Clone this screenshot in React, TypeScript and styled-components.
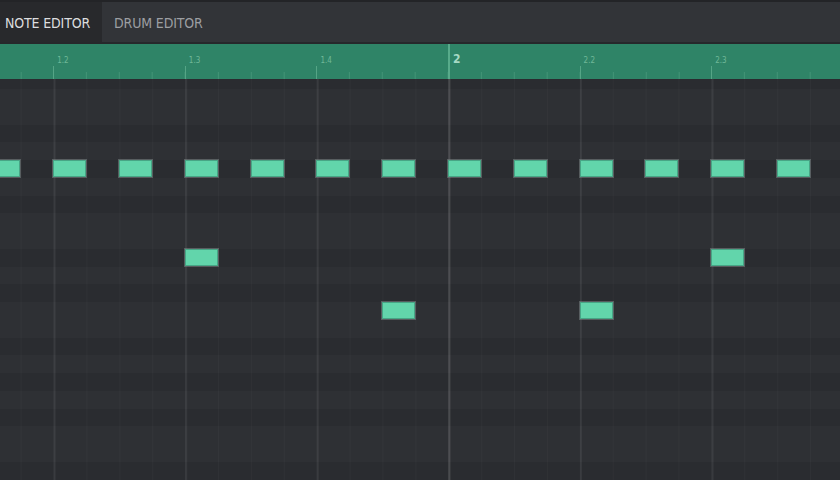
import React from 'react';
import styled, { createGlobalStyle } from 'styled-components';

// grid geometry (px)
const SIXTEENTH = 32.9;
const BEAT = SIXTEENTH * 4;
const SCROLL_X = 78.4;
const ROW_H = 17.75;
const SCROLL_Y = 7.75;
const ROW_COUNT = 25;
const BEAT_COUNT = 8;
const BEATS_PER_BAR = 4;

const BLACK_KEYS = [1, 3, 6, 8, 10];
// pitch class of the row, counting down from the top visible row (C#)
const pitchClass = (row: number) => (((13 - row) % 12) + 12) % 12;

interface Note {
  row: number;
  step: number;
  length: number;
}

const notes: Note[] = [
  ...Array.from({ length: 13 }, (_, i) => ({ row: 5, step: 2 + i * 2, length: 1 })),
  { row: 10, step: 8, length: 1 },
  { row: 10, step: 24, length: 1 },
  { row: 13, step: 14, length: 1 },
  { row: 13, step: 20, length: 1 },
];

const GlobalStyle = createGlobalStyle`
  html, body {
    margin: 0;
    padding: 0;
    background: #2c2e32;
  }
  * {
    box-sizing: border-box;
  }
`;

const Editor = styled.div`
  width: 840px;
  height: 480px;
  overflow: hidden;
  display: flex;
  flex-direction: column;
  background: #2c2e32;
  font-family: "DejaVu Sans Condensed", "DejaVu Sans", sans-serif;
`;

const TabBar = styled.div`
  height: 44px;
  flex: none;
  display: flex;
  background: #323438;
  border-top: 2px solid #232427;
  border-bottom: 2px solid #26282b;
`;

interface TabProps {
  active?: boolean;
}

const Tab = styled.div<TabProps>`
  display: flex;
  align-items: center;
  padding: 1px 12px 0;
  font-size: 14px;
  letter-spacing: -0.15px;
  color: ${({ active }) => (active ? '#dcdddf' : '#9c9ea2')};
  background: ${({ active }) => (active ? '#28292c' : 'transparent')};
  &:first-child {
    padding-left: 5px;
  }
`;

const Ruler = styled.div`
  height: 35px;
  flex: none;
  overflow: hidden;
  background: #2f8467;
  display: flex;
`;

const RulerTrack = styled.div`
  display: flex;
  margin-left: -${SCROLL_X}px;
`;

interface BeatCellProps {
  isBar: boolean;
}

const BeatCell = styled.div<BeatCellProps>`
  flex: none;
  width: ${BEAT}px;
  height: 100%;
  padding-left: ${({ isBar }) => (isBar ? 5 : 4)}px;
  padding-top: ${({ isBar }) => (isBar ? 9 : 13)}px;
  background:
    ${({ isBar }) =>
      isBar
        ? 'linear-gradient(to right, #58ab8b 2px, transparent 2px) 0 0 / 100% 100% no-repeat,'
        : ''}
    linear-gradient(to right, #55a586 1px, transparent 1px) 0 100% / 100% 13px no-repeat,
    linear-gradient(to right, #429476 1px, transparent 1px) 0 100% / ${SIXTEENTH}px 7px repeat-x;
`;

const BeatLabel = styled.span<BeatCellProps>`
  display: block;
  font-size: ${({ isBar }) => (isBar ? 12 : 8)}px;
  font-weight: ${({ isBar }) => (isBar ? 700 : 400)};
  line-height: 1;
  color: ${({ isBar }) => (isBar ? '#a6d9c4' : '#6fb898')};
`;

const Viewport = styled.div`
  flex: 1;
  overflow: hidden;
  display: flex;
`;

const Canvas = styled.div`
  position: relative;
  flex: none;
  width: ${BEAT * BEAT_COUNT}px;
  margin: -${SCROLL_Y}px 0 0 -${SCROLL_X}px;
`;

const Rows = styled.div`
  display: flex;
  flex-direction: column;
`;

interface KeyRowProps {
  black: boolean;
}

const KeyRow = styled.div<KeyRowProps>`
  height: ${ROW_H}px;
  flex: none;
  background: ${({ black }) => (black ? '#2a2c30' : '#2e3034')};
`;

const GridLines = styled.div`
  position: absolute;
  inset: 0;
  pointer-events: none;
  background:
    linear-gradient(to right, rgba(255, 255, 255, 0.09) 2px, transparent 2px) 0 0 / ${BEAT * BEATS_PER_BAR}px 100% repeat-x,
    linear-gradient(to right, rgba(255, 255, 255, 0.06) 1.5px, transparent 1.5px) 0 0 / ${BEAT}px 100% repeat-x,
    linear-gradient(to right, rgba(255, 255, 255, 0.025) 1px, transparent 1px) 0 0 / ${SIXTEENTH}px 100% repeat-x;
`;

const NoteBlock = styled.div`
  position: absolute;
  height: ${ROW_H - 1}px;
  background: #62d5ab;
  border: 1px solid #47a585;
  box-shadow: 0 0 0 1px rgba(140, 150, 150, 0.45);
`;

const beatLabel = (index: number) => {
  const bar = Math.floor(index / BEATS_PER_BAR) + 1;
  const beat = (index % BEATS_PER_BAR) + 1;
  return beat === 1 ? `${bar}` : `${bar}.${beat}`;
};

export default function App() {
  return (
    <>
      <GlobalStyle />
      <Editor>
        <TabBar>
          <Tab active>NOTE EDITOR</Tab>
          <Tab>DRUM EDITOR</Tab>
        </TabBar>
        <Ruler>
          <RulerTrack>
            {Array.from({ length: BEAT_COUNT }, (_, i) => {
              const isBar = i % BEATS_PER_BAR === 0;
              // labels of the beats scrolled out of view are not drawn
              const visible = i > 0 && i < BEAT_COUNT - 1;
              return (
                <BeatCell key={i} isBar={isBar}>
                  {visible && <BeatLabel isBar={isBar}>{beatLabel(i)}</BeatLabel>}
                </BeatCell>
              );
            })}
          </RulerTrack>
        </Ruler>
        <Viewport>
          <Canvas>
            <Rows>
              {Array.from({ length: ROW_COUNT }, (_, r) => (
                <KeyRow key={r} black={BLACK_KEYS.includes(pitchClass(r))} />
              ))}
            </Rows>
            <GridLines />
            {notes.map((n, i) => (
              <NoteBlock
                key={i}
                style={{
                  left: n.step * SIXTEENTH,
                  top: n.row * ROW_H,
                  width: n.length * SIXTEENTH,
                }}
              />
            ))}
          </Canvas>
        </Viewport>
      </Editor>
    </>
  );
}
